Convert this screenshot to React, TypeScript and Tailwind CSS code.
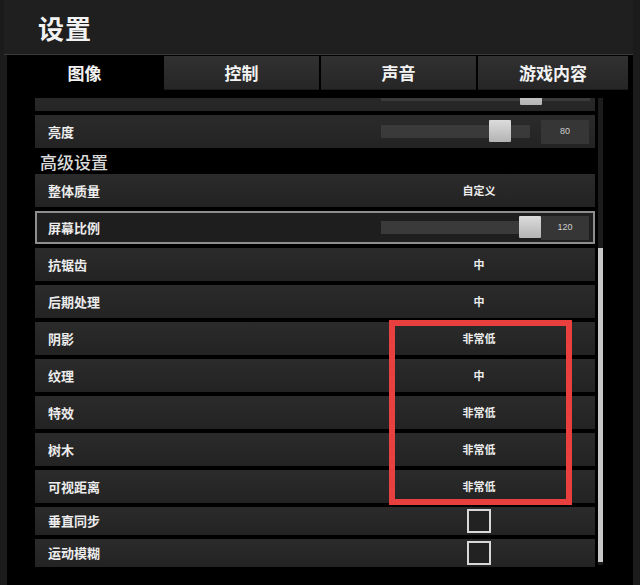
import React from "react";

type Row =
  | { kind: "text"; label: string; value: string }
  | { kind: "check"; label: string };

const qualityRows: Row[] = [
  { kind: "text", label: "抗锯齿", value: "中" },
  { kind: "text", label: "后期处理", value: "中" },
];

const markedRows: Row[] = [
  { kind: "text", label: "阴影", value: "非常低" },
  { kind: "text", label: "纹理", value: "中" },
  { kind: "text", label: "特效", value: "非常低" },
  { kind: "text", label: "树木", value: "非常低" },
  { kind: "text", label: "可视距离", value: "非常低" },
];

const checkRows: Row[] = [
  { kind: "check", label: "垂直同步" },
  { kind: "check", label: "运动模糊" },
];

const tabs = [
  { name: "图像", w: "w-[155px]" },
  { name: "控制", w: "w-[155px]" },
  { name: "声音", w: "w-[155px]" },
  { name: "游戏内容", w: "w-[150px]" },
];

const Slider = ({
  trackW,
  thumbLeft,
  value,
}: {
  trackW: number;
  thumbLeft: number;
  value?: string;
}) => (
  <div className="flex items-center">
    <div className="relative h-[13px] bg-[#3a3a3a]" style={{ width: trackW }}>
      <div
        className="absolute top-[-5px] w-[22px] h-[22px] bg-linear-to-b from-[#dcdcdc] to-[#b4b4b4] rounded-[1px]"
        style={{ left: thumbLeft }}
      />
    </div>
    {value && (
      <div
        className="h-[24px] w-[48px] bg-[#363636] flex items-center justify-center text-[9px] text-[#cfcfcf] font-['Liberation_Sans',sans-serif]"
        style={{ marginLeft: 160 - trackW }}
      >
        {value}
      </div>
    )}
  </div>
);

const SettingRow = ({ row }: { row: Row }) => (
  <div
    className={`flex items-center pl-[13px] bg-linear-to-b from-[#2b2b2b] to-[#232323] ${
      row.kind === "check" ? "h-[28px]" : "h-[33px]"
    }`}
  >
    <span className="w-[333px] text-[13px] font-bold text-[#ececec]">{row.label}</span>
    <div className="w-[196px] flex justify-center">
      {row.kind === "text" ? (
        <span className="text-[11px] font-bold text-[#ececec]">{row.value}</span>
      ) : (
        <div className="w-[24px] h-[24px] border-2 border-[#d8d8d8] bg-[#222]" />
      )}
    </div>
  </div>
);

export default function App() {
  return (
    <div className="w-[640px] h-[585px] bg-[#1b1b1b] flex flex-col overflow-hidden font-['Noto_Sans_CJK_SC','Noto_Sans',sans-serif] text-white">
      {/* Header */}
      <div className="h-[55px] shrink-0 ml-[4px] mr-[7px] bg-[#1f1f1f] border-b border-[#3a3a3a] flex items-center pl-[34px]">
        <h1 className="text-[26px] font-bold tracking-[1px] text-[#f2f2f2]">设置</h1>
      </div>

      <div className="flex-1 flex">
        <div className="w-[7px] shrink-0" />
        <div className="w-[626px] bg-black flex flex-col">
          {/* Tabs */}
          <div className="h-[35px] shrink-0 flex gap-[2px]">
            {tabs.map((t, i) => (
              <div
                key={t.name}
                className={`${t.w} flex items-center justify-center text-[17px] font-bold text-[#f2f2f2] ${
                  i === 0
                    ? "bg-black"
                    : "bg-linear-to-b from-[#313131] to-[#262626] border-b border-[#1a1a1a] mt-[1px]"
                }`}
              >
                {t.name}
              </div>
            ))}
          </div>

          {/* Content */}
          <div className="mt-[8px] flex h-[470px]">
            <div className="ml-[28px] w-[560px] flex flex-col gap-[4px] overflow-hidden">
              {/* partly scrolled row */}
              <div className="-mt-[20px] h-[33px] shrink-0 flex items-center pl-[346px] bg-linear-to-b from-[#2b2b2b] to-[#262626]">
                <Slider trackW={209} thumbLeft={139} />
              </div>

              <div className="h-[33px] shrink-0 flex items-center pl-[13px] bg-linear-to-b from-[#2b2b2b] to-[#232323]">
                <span className="w-[333px] text-[13px] font-bold text-[#ececec]">亮度</span>
                <Slider trackW={149} thumbLeft={108} value="80" />
              </div>

              <div className="h-[18px] shrink-0 flex items-center pl-[5px] text-[17px] font-medium text-[#dadada] leading-none">
                高级设置
              </div>

              <SettingRow row={{ kind: "text", label: "整体质量", value: "自定义" }} />

              <div className="h-[33px] shrink-0 flex items-center pl-[13px] bg-[#1e1e1e] ring-2 ring-inset ring-[#8e8e8e]">
                <span className="w-[333px] text-[13px] font-bold text-[#ececec]">屏幕比例</span>
                <Slider trackW={160} thumbLeft={138} value="120" />
              </div>

              {qualityRows.map((r) => (
                <SettingRow key={r.label} row={r} />
              ))}

              <div className="relative flex flex-col gap-[4px]">
                {markedRows.map((r) => (
                  <SettingRow key={r.label} row={r} />
                ))}
                {/* annotation frame */}
                <div className="absolute left-[354px] w-[183px] top-[-2px] bottom-[-2px] border-[6px] border-[#e8403f]" />
              </div>

              {checkRows.map((r) => (
                <SettingRow key={r.label} row={r} />
              ))}
            </div>

            {/* Scrollbar */}
            <div className="ml-[3px] w-[5px] h-[467px] bg-[#1c1c1c] flex flex-col">
              <div className="mt-[150px] h-[314px] bg-[#c8c8c8]" />
            </div>
          </div>
        </div>
        <div className="flex-1 bg-[#1b1b1b]" />
      </div>
    </div>
  );
}
